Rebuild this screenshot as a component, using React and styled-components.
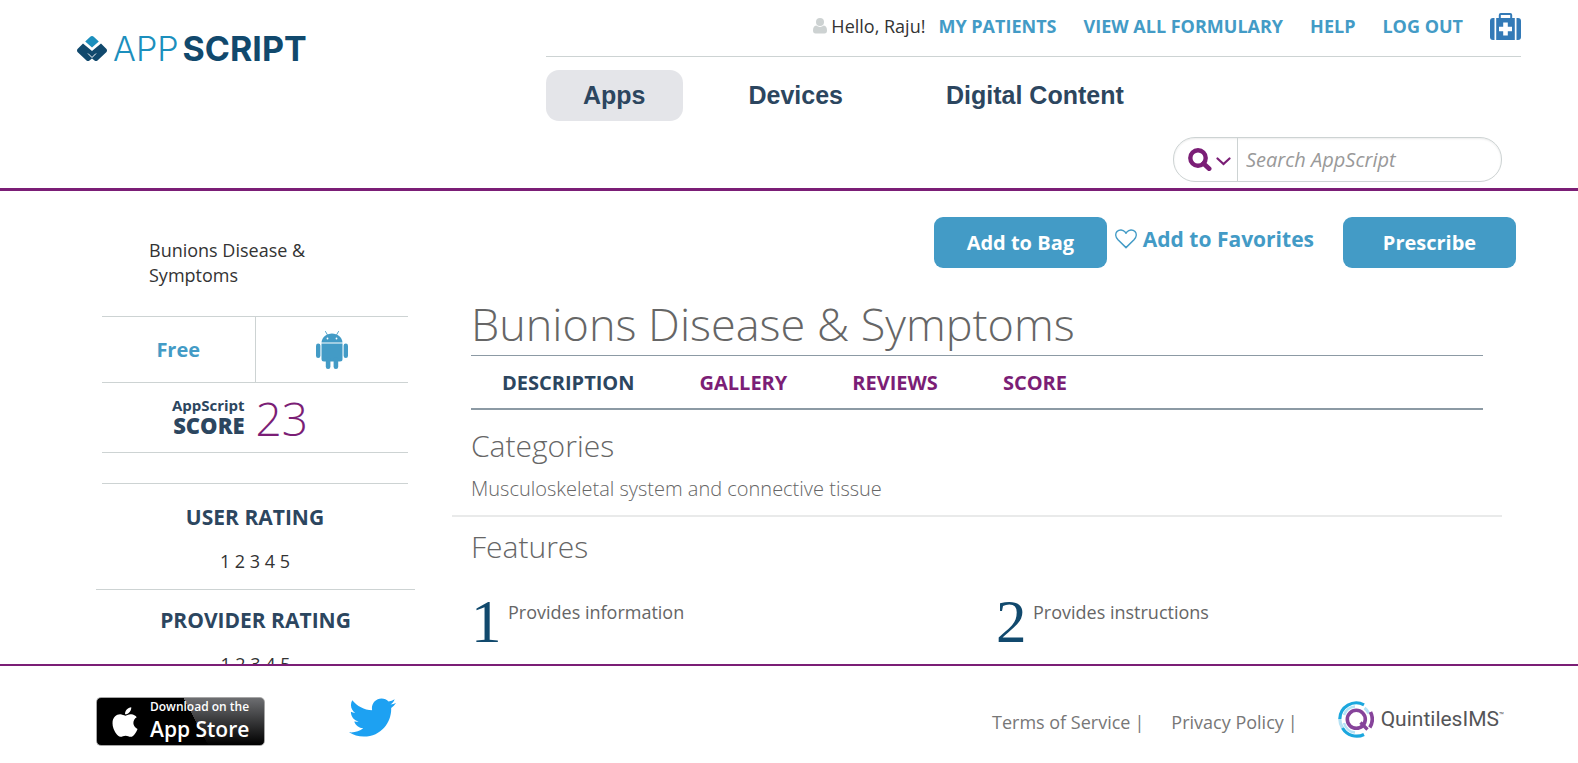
import React from "react";
import styled, { createGlobalStyle } from "styled-components";
import { FaTwitter, FaApple } from "react-icons/fa";

const color = {
  link: "#439bc6",
  navy: "#2c465f",
  deep: "#11496d",
  purple: "#7b1e76",
  text: "#333333",
  grey: "#666666",
  line: "#cdd3d3",
};

const GlobalStyle = createGlobalStyle`
  *, *::before, *::after { box-sizing: border-box; }
  body {
    margin: 0;
    background: #ffffff;
    color: ${color.text};
    font-family: "Open Sans", "Liberation Sans", sans-serif;
    font-size: 18px;
    line-height: 25px;
  }
  h1, h2, h3, p, ul, ol { margin: 0; padding: 0; }
  ul, ol { list-style: none; }
  a { text-decoration: none; }
  button, input { font-family: inherit; }
  button { cursor: pointer; }
`;

const Page = styled.div`
  display: flex;
  flex-direction: column;
  height: 100vh;
`;

const Header = styled.header`
  display: flex;
  flex: none;
  padding: 0 57px 6px 77px;
  border-bottom: 3px solid ${color.purple};
`;

const Brand = styled.a`
  display: flex;
  flex: none;
  align-items: center;
  gap: 6px;
  width: 469px;
  height: 41px;
  margin-top: 28px;
  color: #1c8fbd;
  font-family: Inter, sans-serif;
  font-size: 34px;
  font-weight: 300;
  line-height: 41px;

  strong { margin-left: 4px; color: ${color.deep}; font-weight: 700; }
`;

const HeaderBody = styled.div`
  display: flex;
  flex: 1;
  flex-direction: column;
`;

const Toolbar = styled.nav`
  display: flex;
  align-items: center;
  justify-content: flex-end;
  gap: 27px;
  height: 57px;
  padding-bottom: 4px;
  border-bottom: 1px solid ${color.line};
  white-space: nowrap;
`;

const Greeting = styled.span`
  display: flex;
  align-items: center;
  gap: 4px;
  margin-right: -14px;

  svg { color: #cdd2d2; }
`;

const ToolbarLink = styled.a`
  display: flex;
  color: ${(p) => (p.$icon ? "#337ab7" : color.link)};
  font-weight: 700;
`;

const MainNav = styled.nav`
  display: flex;
  gap: 29px;
  margin-top: 13px;
`;

const MainNavLink = styled.a`
  padding: 0 37px;
  border-radius: 13px;
  background: ${(p) => (p.$active ? "#e4e5e9" : "transparent")};
  color: ${color.navy};
  font-family: "Liberation Sans", Arial, sans-serif;
  font-size: 25px;
  font-weight: 700;
  line-height: 51px;
  white-space: nowrap;
`;

const SearchBox = styled.form`
  display: flex;
  align-self: flex-end;
  width: 329px;
  height: 45px;
  margin: 16px 19px 0 0;
  border: 1px solid ${color.line};
  border-radius: 22px;
  box-shadow: inset 0 1px 2px rgba(0, 0, 0, 0.08);
  overflow: hidden;
`;

const SearchScope = styled.button`
  display: flex;
  flex: none;
  align-items: center;
  gap: 4px;
  width: 64px;
  padding: 0 0 0 14px;
  border: 0;
  border-right: 1px solid ${color.line};
  background: transparent;
  color: ${color.purple};

  svg + svg { margin-top: 4px; }
`;

const SearchInput = styled.input`
  flex: 1;
  min-width: 0;
  padding: 0 8px;
  border: 0;
  outline: 0;
  background: transparent;
  color: ${color.text};
  font-size: 20px;

  &::placeholder { color: #999999; font-style: italic; opacity: 1; }
`;

const Main = styled.main`
  display: flex;
  flex: 1;
  gap: 37px;
  min-height: 0;
  padding: 0 62px 0 96px;
  overflow-y: auto;
  scrollbar-width: none;
`;

const Sidebar = styled.aside`
  flex: none;
  width: 319px;
  padding-top: 47px;
`;

const AppName = styled.p`
  max-width: 240px;
  margin: 0 0 28px 53px;
  padding-right: 30px;
`;

const Facts = styled.div`
  margin: 0 7px 0 6px;
  border-top: 1px solid ${color.line};
`;

const FactRow = styled.div`
  display: flex;
  align-items: center;
  height: ${(p) => p.$height};
  padding-right: ${(p) => (p.$shifted ? "30px" : "0")};
  justify-content: center;
  border-bottom: 1px solid ${color.line};
`;

const FactCell = styled.div`
  display: flex;
  flex: 1;
  align-items: center;
  justify-content: center;
  height: 100%;
  color: ${color.link};
  font-size: 20px;
  font-weight: 700;

  & + & { border-left: 1px solid ${color.line}; }
`;

const ScoreLabel = styled.span`
  margin-right: 11px;
  padding-bottom: 6px;
  color: ${color.navy};
  font-size: 15px;
  font-weight: 700;
  line-height: 20px;
  text-align: right;

  strong { display: block; font-size: 22px; line-height: 20px; }
`;

const ScoreValue = styled.span`
  color: ${color.purple};
  font-size: 46px;
  font-weight: 300;
  line-height: 46px;
`;

const Rating = styled.section`
  margin: ${(p) => (p.$first ? "30px 7px 0 6px" : "0")};
  padding: ${(p) => (p.$first ? "18px 0 15px" : "15px 0")};
  border-top: 1px solid ${color.line};
  text-align: center;
`;

const RatingTitle = styled.h3`
  margin-bottom: 17px;
  color: ${color.navy};
  font-size: 21px;
  font-weight: 700;
  line-height: 30px;
`;

const Content = styled.div`
  flex: 1;
  min-width: 0;
  padding-top: 26px;
`;

const Actions = styled.div`
  display: flex;
  justify-content: flex-end;
`;

const ActionButton = styled.button`
  width: 173px;
  height: 51px;
  padding: 0;
  border: 0;
  border-radius: 9px;
  background: ${color.link};
  color: #ffffff;
  font-size: 20px;
  font-weight: 700;
`;

const FavoriteButton = styled.button`
  display: flex;
  align-items: center;
  gap: 6px;
  height: 43px;
  margin-right: 29px;
  padding: 0 0 0 8px;
  border: 0;
  background: transparent;
  color: ${color.link};
  font-size: 21px;
  font-weight: 700;
  white-space: nowrap;
`;

const Details = styled.div`
  margin-right: 14px;
`;

const TitleBlock = styled.div`
  margin: 25px 19px 0;
`;

const Title = styled.h1`
  border-bottom: 1px solid #8c9aa4;
  color: ${color.grey};
  font-size: 45px;
  font-weight: 300;
  line-height: 62px;
`;

const Tabs = styled.nav`
  display: flex;
  padding-top: 2px;
  border-bottom: 2px solid #8c9aa4;
`;

const Tab = styled.a`
  padding: 0 34px 0 31px;
  color: ${(p) => (p.$active ? color.navy : color.purple)};
  font-size: 20px;
  font-weight: 700;
  line-height: 50px;
`;

const Section = styled.section`
  padding: ${(p) => (p.$top ? "16px 0 11px" : "10px 0 24px")};
  border-bottom: ${(p) => (p.$top ? "2px solid #e9eaea" : "0")};
`;

const SectionTitle = styled.h2`
  padding: 0 19px;
  color: ${color.grey};
  font-size: 30px;
  font-weight: 300;
  line-height: 40px;
`;

const SectionText = styled.p`
  margin-top: 8px;
  padding: 0 19px;
  color: ${color.grey};
  font-size: 20px;
  font-weight: 300;
  line-height: 30px;
`;

const FeatureList = styled.ol`
  display: grid;
  grid-template-columns: 1fr 1fr;
  margin-top: 25px;
`;

const Feature = styled.li`
  display: flex;
  padding-left: 19px;
  color: ${color.grey};

  p { padding-top: 8px; }
`;

const FeatureNumber = styled.span`
  width: 37px;
  color: ${color.deep};
  font-family: "Liberation Serif", "Times New Roman", serif;
  font-size: 61px;
  line-height: 60px;
`;

const Footer = styled.footer`
  display: flex;
  flex: none;
  align-items: center;
  height: 99px;
  padding: 16px 74px 0 96px;
  border-top: 2px solid ${color.purple};
  white-space: nowrap;
`;

const StoreBadge = styled.a`
  display: flex;
  align-items: center;
  gap: 6px;
  width: 169px;
  height: 49px;
  margin-bottom: 2px;
  padding-left: 13px;
  border: 1px solid #a6a6a6;
  border-radius: 5px;
  background:
    linear-gradient(62deg, #000000 58%, transparent 58%),
    linear-gradient(#6d6e71, #000000);
  color: #ffffff;
  font-size: 21px;
  font-weight: 600;
  line-height: 29px;

  svg { margin-left: -2px; margin-right: 2px; }
  small { display: block; font-size: 12px; line-height: 16px; }
`;

const SocialLink = styled.a`
  display: flex;
  margin: 0 auto 10px 84px;
  color: #1da1f2;
`;

const LegalLink = styled.a`
  margin-right: 4px;
  color: #777777;
`;

const LegalItem = styled.span`
  margin-right: ${(p) => p.$gap};
  color: #777777;
`;

const Company = styled.a`
  display: flex;
  align-items: center;
  gap: 7px;
  margin-bottom: 6px;
  color: #555557;
  font-family: Roboto, sans-serif;
  font-size: 21px;
  font-weight: 400;

  sup { font-size: 8px; line-height: 8px; }
`;

const BrandMark = () => (
  <svg width="30" height="26" viewBox="0 0 30 26" aria-hidden="true">
    <path d="M15 0Q16 0 17 1L21.800 5.500L15 11.500L8.200 5.500L13 1Q14 0 15 0Z" fill="#1c8fbd" />
    <path
      d="M6 7.500L15 15L24 7.500L29.500 13Q30.500 14.500 29.500 16L20.500 24.500Q19 25.500 17.500 24.500L15 22.500L12.500 24.500Q11 25.500 9.500 24.500L.5 16Q-.5 14.500 .5 13Z"
      fill="#11496d"
    />
    <path d="M11 17.500L15 21.500L19 17.500" fill="none" stroke="#fff" strokeWidth="1" />
  </svg>
);

const UserIcon = () => (
  <svg width="14" height="16" viewBox="0 0 14 16" fill="currentColor" aria-hidden="true">
    <circle cx="7" cy="4" r="4" />
    <path d="M3.200 7.600Q5 9 7 9T10.800 7.600Q14 8 14 12.500Q14 15.500 11.500 15.500H2.500Q0 15.500 0 12.500Q0 8 3.200 7.600Z" />
  </svg>
);

const MedkitIcon = () => (
  <svg width="31" height="27" viewBox="0 0 31 27" fill="currentColor" aria-hidden="true">
    <path d="M4.500 5V27H3Q0 27 0 24V8Q0 5 3 5Z" />
    <path d="M26.500 5V27H28Q31 27 31 24V8Q31 5 28 5Z" />
    <path
      fillRule="evenodd"
      d="M6.200 5H8.800V2Q8.800 0 10.800 0H20.200Q22.200 0 22.200 2V5H24.800V27H6.200ZM10.800 5H20.200V2H10.800ZM13.200 9.500V13.700H9V18.300H13.200V22.500H17.800V18.300H22V13.700H17.800V9.500Z"
    />
  </svg>
);

const SearchIcon = () => (
  <svg width="24" height="23" viewBox="0 0 24 23" fill="none" stroke="currentColor" aria-hidden="true">
    <circle cx="10" cy="10" r="7.700" strokeWidth="4.400" />
    <path d="M15.500 15.500L21.200 20.800" strokeWidth="4.600" strokeLinecap="round" />
  </svg>
);

const Chevron = () => (
  <svg width="15" height="9" viewBox="0 0 15 9" aria-hidden="true">
    <path d="M1.500 1.500L7.500 7L13.500 1.500" fill="none" stroke="currentColor" strokeWidth="2.200" strokeLinecap="round" />
  </svg>
);

const HeartOutline = () => (
  <svg width="22" height="20" viewBox="0 0 22 20" aria-hidden="true">
    <path
      d="M11 18.600L3 10.800C.4 8 .2 4.600 2 2.600C4.200.2 8 .4 10 2.900L11 4.200L12 2.900C14 .4 17.800.2 20 2.600C21.800 4.600 21.600 8 19 10.800Z"
      fill="none"
      stroke="currentColor"
      strokeWidth="1.500"
      strokeLinejoin="round"
    />
  </svg>
);

const AndroidIcon = () => (
  <svg width="32" height="38" viewBox="0 0 32 38" role="img" aria-label="Android" fill="#439bc6">
    <path d="M9.500 .5L11.500 4M22.500 .5L20.500 4" stroke="#439bc6" strokeWidth=".9" strokeLinecap="round" />
    <path d="M5.500 11.500C6 6 10.500 2.500 16 2.500S26 6 26.500 11.500Z" />
    <circle cx="11.500" cy="7.500" r=".9" fill="#fff" />
    <circle cx="20.500" cy="7.500" r=".9" fill="#fff" />
    <path d="M5.500 12.600H26.500V28Q26.500 30.500 24 30.500H8Q5.500 30.500 5.500 28Z" />
    <rect x="0" y="12.500" width="4.400" height="14.500" rx="2.200" />
    <rect x="27.600" y="12.500" width="4.400" height="14.500" rx="2.200" />
    <rect x="9.800" y="26" width="4.600" height="12" rx="2.200" />
    <rect x="17.600" y="26" width="4.600" height="12" rx="2.200" />
  </svg>
);

const CompanyMark = () => (
  <svg width="36" height="37" viewBox="0 0 36 37" fill="none" aria-hidden="true">
    <path d="M26 3.800A16.500 16.500 0 0 0 1.800 18" stroke="#1ba7de" strokeWidth="3.200" />
    <path d="M1.800 18A16.500 16.500 0 0 0 4.500 27" stroke="#b5e2f5" strokeWidth="3.200" />
    <path d="M4.500 27A16.500 16.500 0 0 0 26 33.500" stroke="#1ba7de" strokeWidth="3.200" />
    <path d="M26.500 7A14 14 0 0 1 31 12.500" stroke="#b5e2f5" strokeWidth="3" />
    <path d="M17 5.500A13 13 0 0 0 6 14" stroke="#b5e2f5" strokeWidth="2.500" />
    <path d="M6 22A13 13 0 0 0 17 31.500" stroke="#b5e2f5" strokeWidth="2.500" />
    <circle cx="18.300" cy="18.300" r="9" stroke="#86439a" strokeWidth="3.600" />
    <path d="M22.500 21.500L29.500 28.500" stroke="#86439a" strokeWidth="3.400" />
    <path d="M32.500 11A16 16 0 0 1 31.800 26.500" stroke="#86439a" strokeWidth="3.600" />
  </svg>
);

const toolbarLinks = ["MY PATIENTS", "VIEW ALL FORMULARY", "HELP", "LOG OUT"];
const mainLinks = ["Apps", "Devices", "Digital Content"];
const tabs = ["DESCRIPTION", "GALLERY", "REVIEWS", "SCORE"];
const ratings = ["USER RATING", "PROVIDER RATING"];
const features = ["Provides information", "Provides instructions"];

export default function App() {
  return (
    <Page>
      <GlobalStyle />
      <Header>
        <Brand href="#">
          <BrandMark />
          <span>APP<strong>SCRIPT</strong></span>
        </Brand>
        <HeaderBody>
          <Toolbar aria-label="Account">
            <Greeting><UserIcon />Hello, Raju!</Greeting>
            {toolbarLinks.map((label) => (
              <ToolbarLink key={label} href="#">{label}</ToolbarLink>
            ))}
            <ToolbarLink href="#" $icon aria-label="Bag"><MedkitIcon /></ToolbarLink>
          </Toolbar>
          <MainNav aria-label="Catalog">
            {mainLinks.map((label, i) => (
              <MainNavLink key={label} href="#" $active={i === 0}>{label}</MainNavLink>
            ))}
          </MainNav>
          <SearchBox role="search">
            <SearchScope type="button" aria-label="Search options">
              <SearchIcon />
              <Chevron />
            </SearchScope>
            <SearchInput type="text" aria-label="Search AppScript" placeholder="Search AppScript" />
          </SearchBox>
        </HeaderBody>
      </Header>

      <Main>
        <Sidebar>
          <AppName>Bunions Disease &amp; Symptoms</AppName>
          <Facts>
            <FactRow $height="66px">
              <FactCell>Free</FactCell>
              <FactCell><AndroidIcon /></FactCell>
            </FactRow>
            <FactRow $height="70px" $shifted>
              <ScoreLabel>AppScript<strong>SCORE</strong></ScoreLabel>
              <ScoreValue>23</ScoreValue>
            </FactRow>
          </Facts>
          {ratings.map((title, i) => (
            <Rating key={title} $first={i === 0}>
              <RatingTitle>{title}</RatingTitle>
              <p>1 2 3 4 5</p>
            </Rating>
          ))}
        </Sidebar>

        <Content>
          <Actions>
            <ActionButton type="button">Add to Bag</ActionButton>
            <FavoriteButton type="button"><HeartOutline />Add to Favorites</FavoriteButton>
            <ActionButton type="button">Prescribe</ActionButton>
          </Actions>
          <Details>
            <TitleBlock>
              <Title>Bunions Disease &amp; Symptoms</Title>
              <Tabs aria-label="App details">
                {tabs.map((label, i) => (
                  <Tab key={label} href="#" $active={i === 0}>{label}</Tab>
                ))}
              </Tabs>
            </TitleBlock>
            <Section $top>
              <SectionTitle>Categories</SectionTitle>
              <SectionText>Musculoskeletal system and connective tissue</SectionText>
            </Section>
            <Section>
              <SectionTitle>Features</SectionTitle>
              <FeatureList>
                {features.map((label, i) => (
                  <Feature key={label}>
                    <FeatureNumber>{i + 1}</FeatureNumber>
                    <p>{label}</p>
                  </Feature>
                ))}
              </FeatureList>
            </Section>
          </Details>
        </Content>
      </Main>

      <Footer>
        <StoreBadge href="#">
          <FaApple size={34} />
          <span><small>Download on the</small>App Store</span>
        </StoreBadge>
        <SocialLink href="#" aria-label="Twitter"><FaTwitter size={47} /></SocialLink>
        <LegalItem $gap="27px"><LegalLink href="#">Terms of Service</LegalLink>|</LegalItem>
        <LegalItem $gap="40px"><LegalLink href="#">Privacy Policy</LegalLink>|</LegalItem>
        <Company href="#">
          <CompanyMark />
          <span>QuintilesIMS<sup>™</sup></span>
        </Company>
      </Footer>
    </Page>
  );
}
